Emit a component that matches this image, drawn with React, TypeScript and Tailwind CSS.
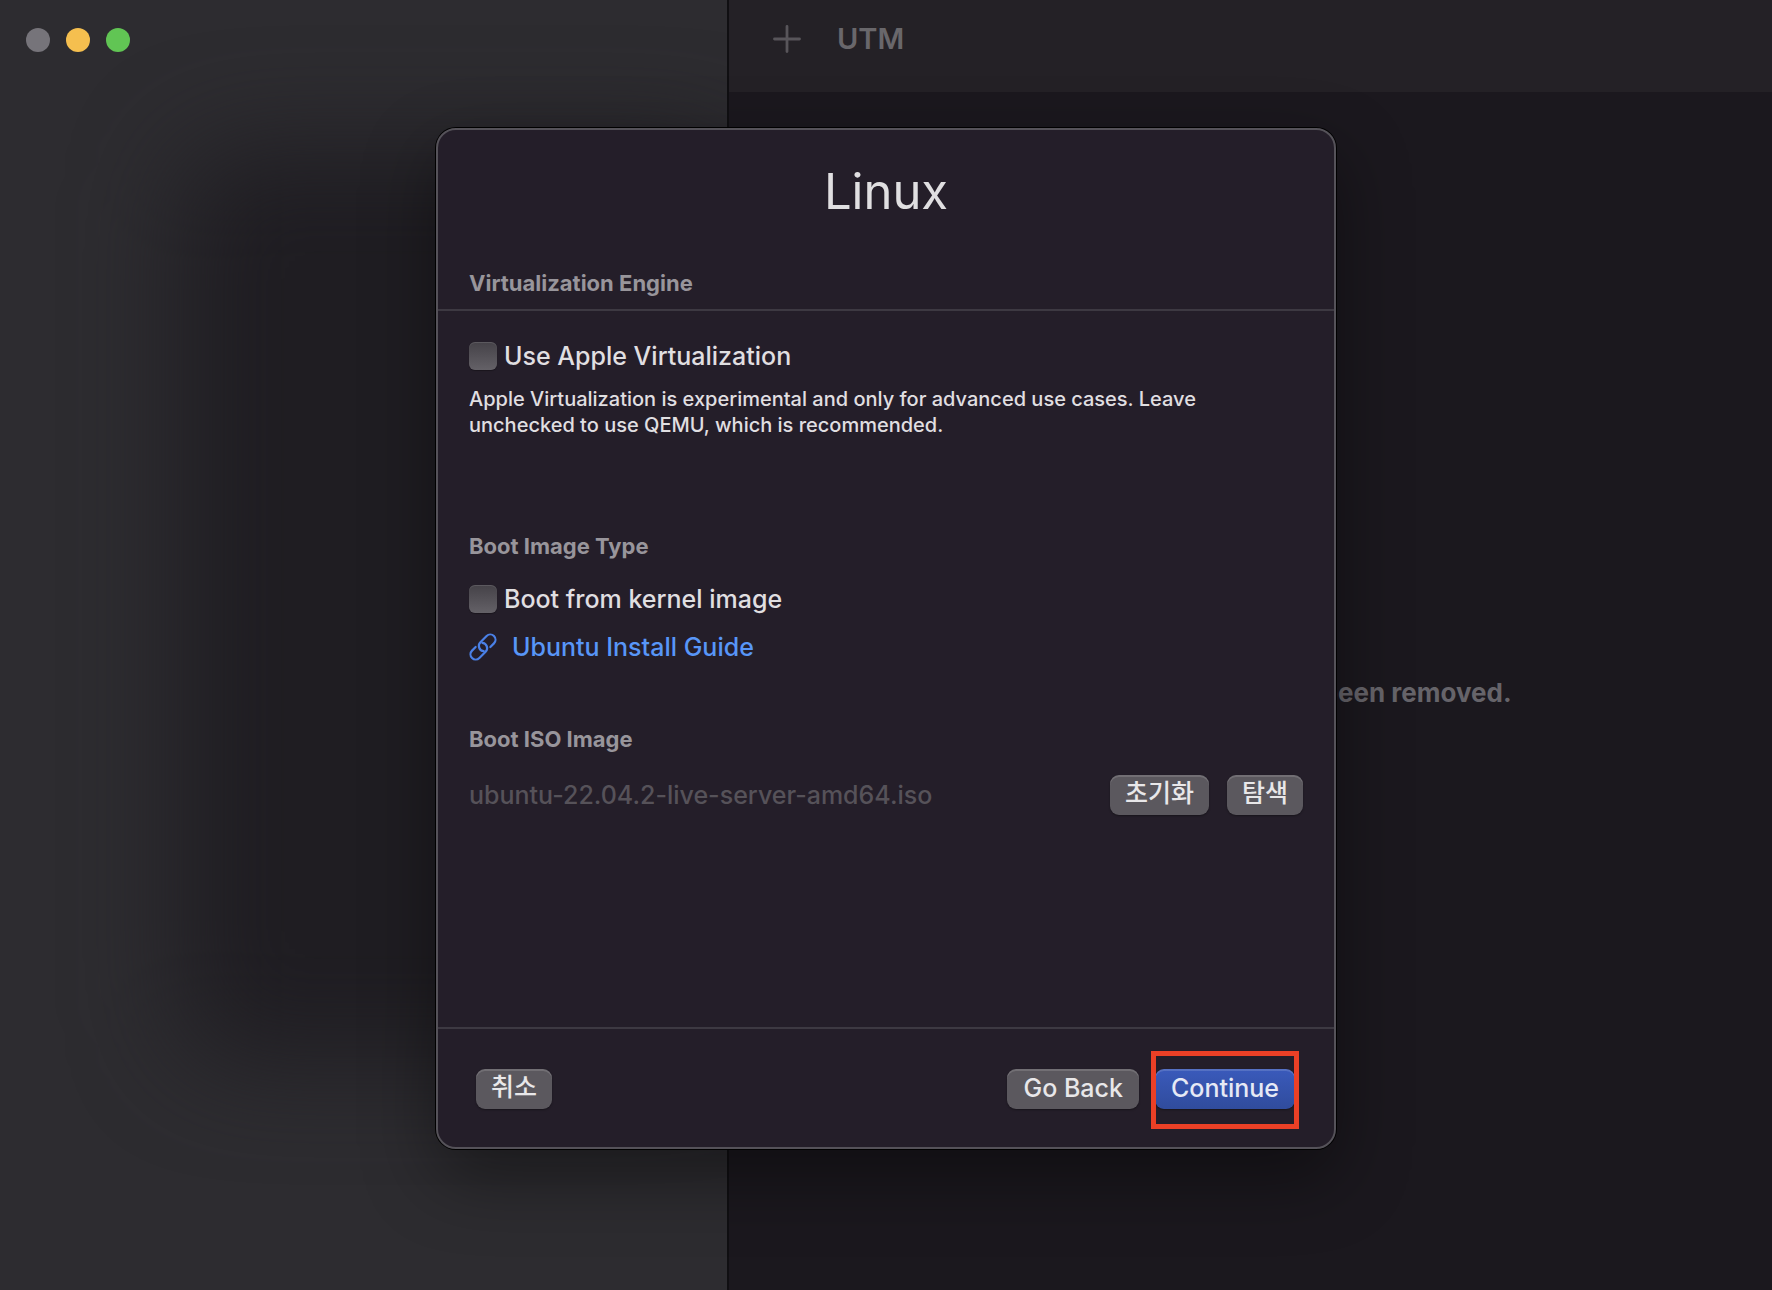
import React from "react";

const FONT = "font-['Inter','Noto_Sans_CJK_KR',sans-serif]";

function TrafficLights() {
  return (
    <div className="flex gap-4 px-[26px] py-7">
      <button type="button" aria-label="Close" disabled className="size-6 rounded-full bg-[#76747a]" />
      <button type="button" aria-label="Minimize" className="size-6 rounded-full bg-[#f5bf4f]" />
      <button type="button" aria-label="Zoom" className="size-6 rounded-full bg-[#61c554]" />
    </div>
  );
}

function Checkbox({ id, label }: { id: string; label: string }) {
  return (
    <div className="flex items-center gap-[7px]">
      <input
        id={id}
        type="checkbox"
        className="size-7 shrink-0 appearance-none rounded-md bg-linear-to-b from-[#454248] to-[#646167] shadow-[0_1px_1px_rgba(0,0,0,0.3),inset_0_1px_0_rgba(255,255,255,0.12)] checked:from-[#3a5cbb] checked:to-[#304c9f]"
      />
      <label htmlFor={id} className="text-[25px] leading-7 font-medium">
        {label}
      </label>
    </div>
  );
}

function PushButton({
  children,
  primary = false,
  korean = false,
}: {
  children: React.ReactNode;
  primary?: boolean;
  korean?: boolean;
}) {
  return (
    <button
      type="button"
      className={[
        "h-10 rounded-[9px] font-medium shadow-[0_1px_2px_rgba(0,0,0,0.35),inset_0_2px_0_rgba(255,255,255,0.14)]",
        primary
          ? "bg-linear-to-b from-[#3a5abb] to-[#304c9d] text-[#e6e9f5]"
          : "bg-[#5b585e] text-[#e8e7e9]",
        korean ? "px-[15px] pb-1 text-[25px] leading-9" : "px-4 pb-0.5 text-[25px] leading-[38px]",
      ].join(" ")}
    >
      {children}
    </button>
  );
}

function LinkIcon() {
  return (
    <svg viewBox="-14 -14 28 28" className="size-7" fill="none" stroke="#4a80e6" strokeWidth="2.2" strokeLinecap="round" aria-hidden="true">
      <g transform="rotate(-45)">
        <path d="M-5.2 -5.2 H-10.3 A5.2 5.2 0 0 0 -10.3 5.2 H-1.5 A5.2 5.2 0 0 0 2.4 -3.4" />
        <path d="M5.2 5.2 H10.3 A5.2 5.2 0 0 0 10.3 -5.2 H1.5 A5.2 5.2 0 0 0 -2.4 3.4" />
      </g>
    </svg>
  );
}

function SectionTitle({ children }: { children: React.ReactNode }) {
  return <h2 className="text-[22px] leading-7 font-bold text-[#98959b]">{children}</h2>;
}

function Sheet() {
  return (
    <section
      role="dialog"
      aria-labelledby="sheet-title"
      className="flex w-full max-w-[900px] flex-col rounded-[20px] border-2 border-[#555259] bg-[#241e29] text-[#e0dfe1] shadow-[0_0_0_1px_#000000,0_28px_72px_rgba(0,0,0,0.42)]"
    >
      <header className="border-b-2 border-[#3d3942] px-[31px] pt-[30px] pb-3">
        <h1 id="sheet-title" className="text-center text-[49px] leading-[64px]">
          Linux
        </h1>
        <div className="mt-[45px]">
          <SectionTitle>Virtualization Engine</SectionTitle>
        </div>
      </header>

      <div className="flex flex-col px-[31px] pt-[31px] pb-[212px]">
        <Checkbox id="apple-virtualization" label="Use Apple Virtualization" />
        <p className="mt-4 max-w-[760px] text-[20px] leading-[26px] font-medium">
          Apple Virtualization is experimental and only for advanced use cases. Leave unchecked to use QEMU, which is
          recommended.
        </p>

        <div className="mt-[94px]">
          <SectionTitle>Boot Image Type</SectionTitle>
        </div>
        <div className="mt-[25px]">
          <Checkbox id="boot-kernel" label="Boot from kernel image" />
        </div>
        <a
          href="#ubuntu-install-guide"
          className="mt-5 flex items-center gap-[15px] self-start text-[25px] leading-7 font-medium text-[#5896f8]"
        >
          <LinkIcon />
          Ubuntu Install Guide
        </a>

        <div className="mt-16">
          <SectionTitle>Boot ISO Image</SectionTitle>
        </div>
        <div className="mt-[22px] flex items-center gap-[18px]">
          <input
            type="text"
            aria-label="Boot ISO Image"
            disabled
            defaultValue="ubuntu-22.04.2-live-server-amd64.iso"
            className="h-10 min-w-0 flex-1 bg-transparent text-[25px] leading-10 font-medium text-[#565259]"
          />
          <PushButton korean>초기화</PushButton>
          <PushButton korean>탐색</PushButton>
        </div>
      </div>

      <footer className="flex items-center justify-between border-t-2 border-[#3d3942] pt-10 pr-[39px] pb-[38px] pl-[38px]">
        <PushButton korean>취소</PushButton>
        <div className="flex gap-4">
          <PushButton>Go Back</PushButton>
          <div className="relative">
            <PushButton primary>Continue</PushButton>
            <div className="pointer-events-none absolute -inset-x-1 -top-[18px] -bottom-5 border-[5px] border-[#eb4026]" />
          </div>
        </div>
      </footer>
    </section>
  );
}

export default function App() {
  return (
    <div className={`relative flex min-h-screen overflow-hidden bg-[#1b181e] ${FONT}`}>
      <aside className="relative w-[729px] shrink-0 overflow-hidden border-r-2 border-[#100f12] bg-[#2d2c30]">
        <div className="absolute top-[150px] -right-5 bottom-[230px] left-[180px] rounded-[60px] bg-[#1f1d22] blur-[52px]" />
        <div className="relative">
          <TrafficLights />
        </div>
      </aside>

      <main className="flex min-w-0 flex-1 flex-col">
        <div className="flex h-[92px] shrink-0 items-start gap-9 bg-[#242126] pt-[19px] pl-11">
          <button type="button" aria-label="Create a new virtual machine" className="flex h-10 items-center">
            <svg viewBox="0 0 28 28" className="size-7" stroke="#58555a" strokeWidth="2.8" strokeLinecap="round" aria-hidden="true">
              <path d="M14 1.5V26.5M1.5 14H26.5" />
            </svg>
          </button>
          <span className="text-[29px] leading-10 font-semibold text-[#69676b]">UTM</span>
        </div>
        <div className="flex flex-1 items-center justify-center pt-1 pl-4">
          <p className="text-[26px] leading-8 font-bold text-[#66646a]">This virtual machine has been removed.</p>
        </div>
      </main>

      <div className="absolute inset-0 flex items-start justify-center pt-32">
        <Sheet />
      </div>
    </div>
  );
}
